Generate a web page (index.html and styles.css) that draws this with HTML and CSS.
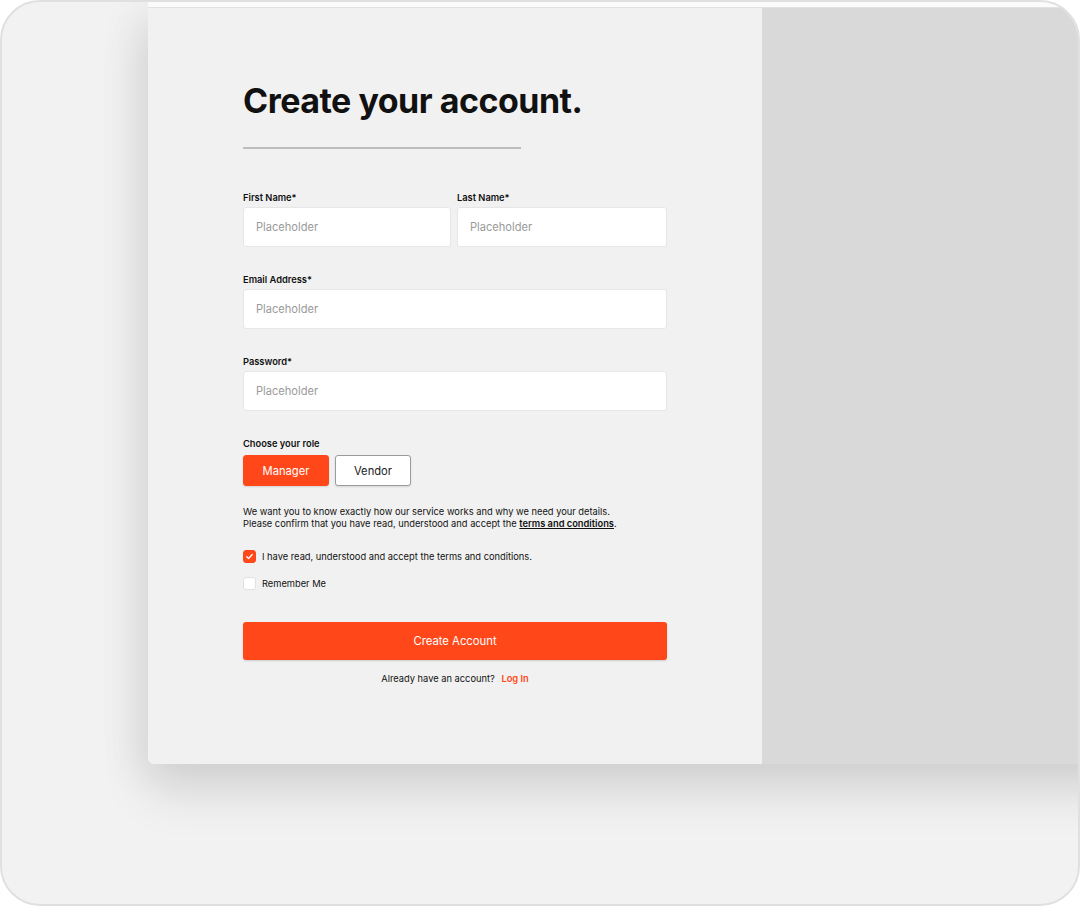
FILE: index.html
```html
<!DOCTYPE html>
<html lang="en">
<head>
    <meta charset="UTF-8">
    <meta name="viewport" content="width=device-width, initial-scale=1.0">
    <title>Create your account</title>
    <link rel="stylesheet" href="styles.css">
</head>
<body>
    <div class="frame">
        <div class="card">
            <div class="form-panel">
                <h1>Create your account.</h1>
                <hr class="divider">

                <div class="row">
                    <div class="field">
                        <label>First Name*</label>
                        <input type="text" placeholder="Placeholder">
                    </div>
                    <div class="field">
                        <label>Last Name*</label>
                        <input type="text" placeholder="Placeholder">
                    </div>
                </div>

                <div class="field">
                    <label>Email Address*</label>
                    <input type="email" placeholder="Placeholder">
                </div>

                <div class="field">
                    <label>Password*</label>
                    <input type="password" placeholder="Placeholder">
                </div>

                <div class="field">
                    <label>Choose your role</label>
                    <div class="roles">
                        <button class="role active">Manager</button>
                        <button class="role">Vendor</button>
                    </div>
                </div>

                <p class="notice">
                    We want you to know exactly how our service works and why we need your details.<br>
                    Please confirm that you have read, understood and accept the <a href="#">terms and conditions</a>.
                </p>

                <label class="check">
                    <span class="box checked">
                        <svg width="9" height="9" viewBox="0 0 10 10"><path d="M2 5.2l2 2 4-4.4" fill="none" stroke="#fff" stroke-width="1.5" stroke-linecap="round" stroke-linejoin="round"/></svg>
                    </span>
                    I have read, understood and accept the terms and conditions.
                </label>
                <label class="check">
                    <span class="box"></span>
                    Remember Me
                </label>

                <button class="submit">Create Account</button>
                <p class="login">Already have an account? <a href="#">Log In</a></p>
            </div>
            <div class="side-panel"></div>
        </div>
    </div>
</body>
</html>
```

FILE: styles.css
```css
* {
    box-sizing: border-box;
}
body {
    margin: 0;
    font-family: Inter, "Noto Sans", sans-serif;
    color: #111;
}
.frame {
    width: 1080px;
    height: 906px;
    background: #f2f2f2;
    border: 2px solid #e0e0e0;
    border-radius: 40px;
    overflow: hidden;
    padding: 0 0 0 146px;
}
.card {
    display: flex;
    width: 980px;
    height: 762px;
    border-top: 5px solid #fbfbfb;
    border-bottom-left-radius: 6px;
    box-shadow: 0 30px 50px rgba(0, 0, 0, 0.1), -14px 10px 40px rgba(0, 0, 0, 0.06);
}
.form-panel {
    width: 614px;
    background: #f1f1f1;
    border-top: 1px solid #e2e2e2;
    border-bottom-left-radius: 6px;
    padding: 71px 95px 0 95px;
}
.side-panel {
    flex: 1;
    background: #d9d9d9;
    border-top: 1px solid #e2e2e2;
}
h1 {
    margin: 0;
    font-size: 34px;
    font-weight: 700;
    letter-spacing: -0.5px;
    line-height: 44px;
}
.divider {
    width: 278px;
    margin: 24px 0 43px;
    border: 0;
    border-top: 2px solid #bdbdbd;
}
.row {
    display: flex;
    gap: 6px;
}
.row .field {
    flex: 1;
    min-width: 0;
}
.row .field:first-child {
    flex: 0 0 208px;
}
.field {
    display: flex;
    flex-direction: column;
    margin-bottom: 27px;
}
.field label {
    font-size: 9.3px;
    font-weight: 600;
    line-height: 12px;
    margin-bottom: 3px;
}
.field input {
    width: 100%;
    height: 40px;
    border: 1px solid #e6e6e6;
    border-radius: 3px;
    background: #fff;
    padding: 0 12px;
    font-family: inherit;
    font-size: 11.1px;
}
.field input::placeholder {
    color: #9a9a9a;
}
.roles {
    display: flex;
    gap: 6px;
    margin-top: 2px;
}
.role {
    height: 31px;
    width: 76px;
    border: 1px solid #9c9c9c;
    border-radius: 3px;
    background: #fff;
    font-family: inherit;
    font-size: 11.2px;
    color: #222;
    box-shadow: 0 1px 2px rgba(0, 0, 0, 0.12);
}
.role.active {
    width: 86px;
    background: #ff471a;
    border-color: #ff471a;
    color: #fff;
}
.notice {
    margin: -7px 0 20px;
    font-size: 9.3px;
    line-height: 12px;
}
.notice a {
    color: #111;
    font-weight: 600;
}
.check {
    display: flex;
    align-items: center;
    gap: 6px;
    font-size: 9.3px;
    line-height: 13px;
    margin-bottom: 14px;
}
.box {
    width: 13px;
    height: 13px;
    border-radius: 3px;
    background: #fff;
    border: 1px solid #e0e0e0;
    display: flex;
    align-items: center;
    justify-content: center;
}
.box.checked {
    background: #ff471a;
    border-color: #ff471a;
}
.submit {
    display: block;
    width: 100%;
    height: 38px;
    margin-top: 32px;
    border: 0;
    border-radius: 3px;
    background: #ff471a;
    color: #fff;
    font-family: inherit;
    font-size: 11.3px;
    box-shadow: 0 1px 2px rgba(0, 0, 0, 0.15);
}
.login {
    margin: 13px 0 0;
    text-align: center;
    font-size: 9.3px;
    line-height: 12px;
}
.login a {
    margin-left: 4px;
    color: #ff471a;
    font-weight: 600;
    text-decoration: none;
}
```
